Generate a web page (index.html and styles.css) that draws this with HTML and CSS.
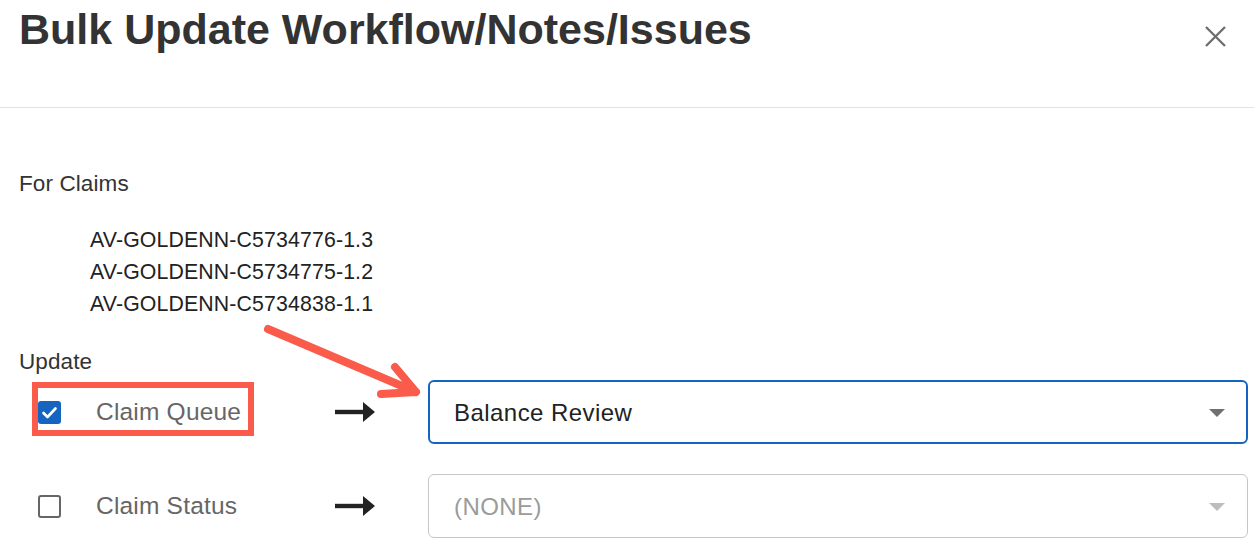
FILE: index.html
```html
<!DOCTYPE html>
<html>
<head>
<meta charset="utf-8">
<link rel="stylesheet" href="styles.css">
</head>
<body>
<div class="dialog">
  <header class="dialog-header">
    <h1 class="dialog-title">Bulk Update Workflow/Notes/Issues</h1>
    <button class="close-btn" aria-label="Close">
      <svg width="21" height="21" viewBox="0 0 21 21"><path d="M1 1 L20 20 M20 1 L1 20" stroke="#6d6d6d" stroke-width="2.3" fill="none"/></svg>
    </button>
  </header>
  <section class="dialog-body">
    <div class="section-label">For Claims</div>
    <ul class="claim-list">
      <li>AV-GOLDENN-C5734776-1.3</li>
      <li>AV-GOLDENN-C5734775-1.2</li>
      <li>AV-GOLDENN-C5734838-1.1</li>
    </ul>
    <div class="section-label update-label">Update</div>
    <div class="update-row">
      <span class="checkbox checked">
        <svg width="23" height="23" viewBox="0 0 23 23"><path d="M5.5 12 L9.5 16 L17.5 7.5" stroke="#fff" stroke-width="2.6" fill="none" stroke-linecap="round" stroke-linejoin="round"/></svg>
      </span>
      <span class="row-label">Claim Queue</span>
      <span class="row-arrow">
        <svg width="40" height="20" viewBox="0 0 40 20"><rect x="0" y="7.8" width="29" height="4.4" fill="#222"/><path d="M28 0 L40 10 L28 20 Z" fill="#222"/></svg>
      </span>
      <div class="select active">
        <span class="select-value">Balance Review</span>
        <span class="caret"></span>
      </div>
    </div>
    <div class="update-row second">
      <span class="checkbox"></span>
      <span class="row-label">Claim Status</span>
      <span class="row-arrow">
        <svg width="40" height="20" viewBox="0 0 40 20"><rect x="0" y="7.8" width="29" height="4.4" fill="#222"/><path d="M28 0 L40 10 L28 20 Z" fill="#222"/></svg>
      </span>
      <div class="select disabled">
        <span class="select-value">(NONE)</span>
        <span class="caret"></span>
      </div>
    </div>
  </section>
  <div class="annot-box"></div>
  <svg class="annot-arrow" width="170" height="90" viewBox="258 318 170 90">
    <path d="M268 329 L416 392 M395 367 L416 392 L381 394" stroke="#fb5b4b" stroke-width="8" fill="none" stroke-linecap="round" stroke-linejoin="round"/>
  </svg>
</div>
</body>
</html>
```
FILE: styles.css
```css
* { box-sizing: border-box; }
html, body { margin: 0; padding: 0; background: #fff; }
body {
  font-family: "Liberation Sans", Arial, Helvetica, sans-serif;
  color: #333;
  width: 1254px;
  height: 552px;
  overflow: hidden;
}
.dialog { position: relative; width: 1254px; height: 552px; }
.dialog-header {
  height: 108px;
  border-bottom: 1px solid #e2e2e2;
  display: flex;
  justify-content: space-between;
  align-items: flex-start;
  padding: 4px 28px 0 19px;
}
.dialog-title {
  margin: 0;
  font-size: 43px;
  line-height: 50px;
  font-weight: 700;
  color: #333;
}
.close-btn {
  margin-top: 22px;
  border: 0;
  background: none;
  padding: 0;
  width: 21px;
  height: 21px;
  display: block;
}
.close-btn svg { display: block; }
.dialog-body { padding: 63px 6px 0 19px; }
.section-label {
  font-size: 22.5px;
  line-height: 26px;
  color: #333;
  letter-spacing: 0.1px;
}
.claim-list {
  list-style: none;
  margin: 27px 0 0 0;
  padding: 0 0 0 71px;
  font-size: 21.3px;
  line-height: 32px;
  color: #222;
  letter-spacing: 0.13px;
}
.update-label { margin-top: 29px; }
.update-row {
  display: grid;
  grid-template-columns: 58px 239px 93px 1fr;
  align-items: center;
  margin-top: 5px;
  padding-left: 19px;
  height: 64px;
}
.update-row.second { margin-top: 30px; }
.checkbox {
  width: 23px;
  height: 23px;
  border: 2.5px solid #666;
  border-radius: 3px;
  display: block;
}
.checkbox.checked {
  width: 23px;
  height: 23px;
  border: 0;
  background: #1565c0;
  border-radius: 3px;
}
.checkbox svg { display: block; }
.row-label {
  font-size: 24.5px;
  color: #666;
  letter-spacing: 0.2px;
}
.row-arrow { display: flex; align-items: center; }
.row-arrow svg { display: block; }
.select {
  height: 64px;
  border-radius: 6px;
  display: flex;
  align-items: center;
  justify-content: space-between;
  padding: 0 22px 0 25px;
}
.select.active { border: 2px solid #1565c0; }
.select.disabled { border: 1px solid #c6c6c6; padding-left: 25px; }
.select-value {
  font-size: 24px;
  letter-spacing: 0.45px;
  color: #222;
  padding-top: 1px;
}
.select.active .select-value { margin-left: -1px; }
.select.disabled .select-value { color: #9b9b9b; }
.caret {
  width: 0;
  height: 0;
  border-left: 8px solid transparent;
  border-right: 8px solid transparent;
  border-top: 8px solid #707070;
  margin-top: 2px;
}
.select.active .caret { margin-right: -1px; }
.select.disabled .caret { border-top-color: #bdbdbd; }
.annot-box {
  position: absolute;
  left: 32px;
  top: 382px;
  width: 222px;
  height: 54px;
  border: 6px solid #fb5b4b;
}
.annot-arrow {
  position: absolute;
  left: 258px;
  top: 318px;
}
```
